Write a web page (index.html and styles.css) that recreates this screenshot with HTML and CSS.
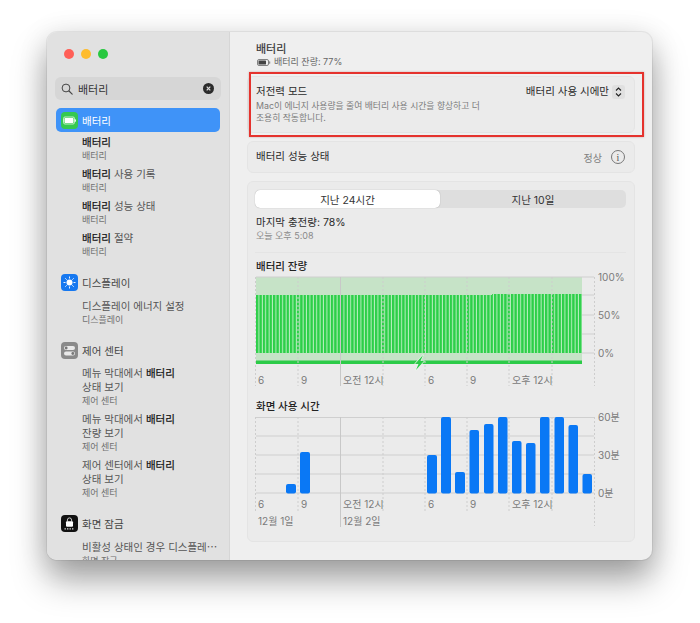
FILE: index.html
```html
<!DOCTYPE html>
<html lang="ko">
<head>
    <meta charset="UTF-8">
    <title>배터리</title>
    <link rel="stylesheet" href="styles.css">
</head>
<body>
    <div class="window">
        <aside class="sidebar">
            <div class="lights">
                <span class="light red"></span>
                <span class="light yellow"></span>
                <span class="light green"></span>
            </div>

            <div class="search">
                <svg class="search-icon" width="12" height="12" viewBox="0 0 12 12"><circle cx="5" cy="5" r="3.9" fill="none" stroke="#444" stroke-width="1"/><path d="M8 8l3.2 3.2" stroke="#444" stroke-width="1.1" stroke-linecap="round"/></svg>
                <span class="search-text">배터리</span>
                <svg class="search-clear" width="11" height="11" viewBox="0 0 11 11"><circle cx="5.5" cy="5.5" r="5.5" fill="#2b2b2b"/><path d="M3.7 3.7l3.6 3.6M7.3 3.7l-3.6 3.6" stroke="#ddd" stroke-width="1.2"/></svg>
            </div>

            <div class="nav-head selected">
                <svg class="nav-icon" viewBox="0 0 17 17"><rect width="17" height="17" rx="4" fill="#35c94f"/><rect x="2.5" y="5" width="11" height="7" rx="1.5" fill="none" stroke="#e8f8ea" stroke-width=".8"/><rect x="3.5" y="6" width="9" height="5" rx=".8" fill="#fff"/><rect x="14" y="7.2" width="1" height="2.6" rx=".5" fill="#e8f8ea"/></svg>
                <span>배터리</span>
            </div>
            <div class="nav-item"><div class="title"><b>배터리</b></div><div class="sub">배터리</div></div>
            <div class="nav-item"><div class="title"><b>배터리</b> 사용 기록</div><div class="sub">배터리</div></div>
            <div class="nav-item"><div class="title"><b>배터리</b> 성능 상태</div><div class="sub">배터리</div></div>
            <div class="nav-item"><div class="title"><b>배터리</b> 절약</div><div class="sub">배터리</div></div>

            <div class="nav-head group">
                <svg class="nav-icon" viewBox="0 0 17 17"><rect width="17" height="17" rx="4" fill="#1678f0"/><circle cx="8.5" cy="8.5" r="3" fill="#fff"/><path d="M8.5 2.5v2M8.5 12.5v2M2.5 8.5h2M12.5 8.5h2M4.3 4.3l1.4 1.4M11.3 11.3l1.4 1.4M12.7 4.3l-1.4 1.4M5.7 11.3l-1.4 1.4" stroke="#fff" stroke-width=".9"/></svg>
                <span>디스플레이</span>
            </div>
            <div class="nav-item"><div class="title">디스플레이 에너지 설정</div><div class="sub">디스플레이</div></div>

            <div class="nav-head group">
                <svg class="nav-icon" viewBox="0 0 17 17"><rect width="17" height="17" rx="4" fill="#8a8a8a"/><rect x="3" y="4" width="11" height="4" rx="2" fill="#e9e9e9"/><circle cx="5.2" cy="6" r="1.4" fill="#777"/><rect x="3" y="9.5" width="11" height="4" rx="2" fill="#e9e9e9"/><circle cx="11.8" cy="11.5" r="1.4" fill="#777"/></svg>
                <span>제어 센터</span>
            </div>
            <div class="nav-item"><div class="title">메뉴 막대에서 <b>배터리</b><br>상태 보기</div><div class="sub">제어 센터</div></div>
            <div class="nav-item"><div class="title">메뉴 막대에서 <b>배터리</b><br>잔량 보기</div><div class="sub">제어 센터</div></div>
            <div class="nav-item"><div class="title">제어 센터에서 <b>배터리</b><br>상태 보기</div><div class="sub">제어 센터</div></div>

            <div class="nav-head group">
                <svg class="nav-icon" viewBox="0 0 17 17"><rect width="17" height="17" rx="4" fill="#111"/><path d="M6.4 6.5V5a2.1 2.1 0 0 1 4.2 0v1.500" fill="none" stroke="#ddd" stroke-width=".9"/><rect x="5" y="6.300" width="7" height="5.500" rx="1" fill="#fff"/><path d="M3.500 13.800h1.400M6 13.800h1.400M8.500 13.800h1.400M11 13.800h1.400" stroke="#ddd" stroke-width="1.300"/></svg>
                <span>화면 잠금</span>
            </div>
            <div class="nav-item"><div class="title">비활성 상태인 경우 디스플레⋯</div><div class="sub">화면 잠금</div></div>
        </aside>

        <main class="main">
            <header class="page-head">
                <div class="page-title">배터리</div>
                <div class="page-sub">
                    <svg width="14" height="7" viewBox="0 0 14 7"><rect x=".5" y=".5" width="11" height="6" rx="1.5" fill="none" stroke="#666" stroke-width=".8"/><rect x="1.5" y="1.5" width="7.5" height="4" rx=".6" fill="#444"/><rect x="12.2" y="2.300" width="1" height="2.400" rx=".5" fill="#777"/></svg>
                    <span>배터리 잔량: 77%</span>
                </div>
            </header>

            <section class="card power-card">
                <div class="power-text">
                    <div class="row-title">저전력 모드</div>
                    <div class="power-desc">Mac이 에너지 사용량을 줄여 배터리 사용 시간을 향상하고 더<br>조용히 작동합니다.</div>
                </div>
                <div class="power-select">
                    <span>배터리 사용 시에만</span>
                    <svg class="stepper" width="13" height="14" viewBox="0 0 13 14"><rect width="13" height="14" rx="3" fill="#e0e0e0"/><path d="M4 5.500l2.500-2.500L9 5.500M4 8.500l2.500 2.500L9 8.500" fill="none" stroke="#222" stroke-width="1.100"/></svg>
                </div>
            </section>

            <section class="card health-card">
                <div class="row-title">배터리 성능 상태</div>
                <div class="health-right">
                    <span class="health-state">정상</span>
                    <span class="info-btn">i</span>
                </div>
            </section>

            <section class="card history">
                <div class="segments">
                    <div class="segment active">지난 24시간</div>
                    <div class="segment">지난 10일</div>
                </div>
                <div class="last-charge">마지막 충전량: 78%</div>
                <div class="last-time">오늘 오후 5:08</div>
                <div class="divider"></div>

                <div class="chart-title">배터리 잔량</div>
                <svg class="chart" width="375" height="118" viewBox="255 272 375 118">
                    <defs>
                        <pattern id="stripes" patternUnits="userSpaceOnUse" x="256" y="0" width="3.4" height="10">
                            <rect width="3.4" height="10" fill="#bdf0c3"/>
                            <rect width="2.4" height="10" fill="#2ccf48"/>
                        </pattern>
                    </defs>
                    <rect x="256" y="277" width="326" height="87" fill="#c6e3c7"/>
                    <path class="grid" d="M256 277H594M582 295H594M582 315H594M582 334H594M582 353H594"/>
                    <rect x="256" y="295" width="236" height="58" fill="url(#stripes)"/>
                    <rect x="492" y="294" width="90" height="59" fill="url(#stripes)"/>
                    <rect x="256" y="360.500" width="326" height="3.500" fill="#2ccb48"/>
                    <path class="grid-dot" d="M255.500 277V386M298 277V386M383 277V386M425 277V386M467 277V386M509 277V386M552 277V386M594.500 277V386"/>
                    <path class="grid-solid" d="M340.500 277V386"/>
                    <path d="M423 355l-8 9h3.500l-2.500 6 8-9h-3.500z" fill="#2ccb48" stroke="#ecf7ec" stroke-width="1.200" stroke-linejoin="round" paint-order="stroke"/>
                    <text class="tick" x="258" y="384">6</text>
                    <text class="tick" x="301" y="384">9</text>
                    <text class="tick" x="343" y="384">오전 12시</text>
                    <text class="tick" x="428" y="384">6</text>
                    <text class="tick" x="470" y="384">9</text>
                    <text class="tick" x="512" y="384">오후 12시</text>
                    <text class="tick" x="598" y="281">100%</text>
                    <text class="tick" x="598" y="319">50%</text>
                    <text class="tick" x="598" y="357">0%</text>
                </svg>

                <div class="chart-title second">화면 사용 시간</div>
                <svg class="chart" width="375" height="124" viewBox="255 412 375 124">
                    <path class="grid" d="M256 417.500H594M256 436H594M256 455H594M256 474H594M256 493H594"/>
                    <path class="grid-dot" d="M255.500 417V513M298 417V513M383 417V513M425 417V513M467 417V513M509 417V513M552 417V513M594.500 417V526"/>
                    <path class="grid-solid" d="M340.500 417V527"/>
                    <g class="bars">
                        <rect x="286" y="484" width="10" height="9.500" rx="2"/>
                        <rect x="300" y="452" width="10" height="41.500" rx="2"/>
                        <rect x="427" y="455" width="10" height="38.500" rx="2"/>
                        <rect x="441" y="417" width="10" height="76.500" rx="2"/>
                        <rect x="455" y="472" width="10" height="21.500" rx="2"/>
                        <rect x="469.500" y="430" width="9.500" height="63.500" rx="2"/>
                        <rect x="484" y="424" width="9.500" height="69.500" rx="2"/>
                        <rect x="498" y="417" width="9.500" height="76.500" rx="2"/>
                        <rect x="512" y="441" width="9.500" height="52.500" rx="2"/>
                        <rect x="526" y="443" width="9.500" height="50.500" rx="2"/>
                        <rect x="540" y="417" width="9.500" height="76.500" rx="2"/>
                        <rect x="554.500" y="417" width="9.500" height="76.500" rx="2"/>
                        <rect x="568.500" y="425" width="9.500" height="68.500" rx="2"/>
                        <rect x="582.500" y="474" width="9.500" height="19.500" rx="2"/>
                    </g>
                    <text class="tick" x="258" y="508">6</text>
                    <text class="tick" x="301" y="508">9</text>
                    <text class="tick" x="343" y="508">오전 12시</text>
                    <text class="tick" x="428" y="508">6</text>
                    <text class="tick" x="470" y="508">9</text>
                    <text class="tick" x="512" y="508">오후 12시</text>
                    <text class="tick" x="258" y="525">12월 1일</text>
                    <text class="tick" x="343" y="525">12월 2일</text>
                    <text class="tick" x="598" y="421">60분</text>
                    <text class="tick" x="598" y="459">30분</text>
                    <text class="tick" x="598" y="497">0분</text>
                </svg>
            </section>
        </main>
    </div>
</body>
</html>
```

FILE: styles.css
```css
* { box-sizing: border-box; }
html, body { height: 100%; }
body { margin: 0; background: #fff; padding: 32px 48px 0 47px; font-family: Inter, "Noto Sans CJK KR", sans-serif; color: #2a2a2a; }

.window { display: flex; width: 605px; height: 528px; background: #efefef; border-radius: 10px; overflow: hidden; box-shadow: 0 0 0 1px rgba(0,0,0,.06), 0 20px 34px rgba(0,0,0,.34), 0 4px 30px rgba(0,0,0,.12); }

.sidebar { width: 183px; flex-shrink: 0; background: #e1e1e1; border-right: 1px solid #d6d6d6; padding: 0 8px; overflow: hidden; }
.lights { display: flex; gap: 7px; padding: 17px 0 0 9px; height: 45px; }
.light { width: 10px; height: 10px; border-radius: 50%; }
.light.red { background: #ff5f57; }
.light.yellow { background: #febc2e; }
.light.green { background: #28c840; }

.search { display: flex; align-items: center; height: 23px; background: #d6d6d6; border-radius: 6px; padding: 0 7px 0 6px; }
.search-icon { margin-right: 5px; }
.search-text { flex: 1; font-size: 11px; color: #333; }

.nav-head { display: flex; align-items: center; gap: 4px; height: 24px; padding-left: 5px; font-size: 10.500px; color: #444; margin: 0 1px; }
.nav-head.selected { background: #3f93f8; color: #fff; border-radius: 5px; margin-top: 8px; margin-bottom: 4px; }
.nav-head.group { margin-top: 12.500px; margin-bottom: 5px; }
.nav-icon { width: 17px; height: 17px; flex-shrink: 0; }

.nav-item { padding-left: 27px; margin-bottom: 6px; white-space: nowrap; }
.nav-item .title { font-size: 10.500px; line-height: 14px; color: #555; }
.nav-item b { font-weight: 400; color: #111; -webkit-text-stroke: .2px #111; }
.nav-item .sub { font-size: 9px; line-height: 12px; color: #707070; }

.main { flex: 1; padding: 0 17px 0 17px; overflow: hidden; }
.page-head { height: 44px; padding: 10px 0 0 9px; }
.page-title { font-size: 11px; line-height: 14px; color: #333; -webkit-text-stroke: .2px #333; }
.page-sub { display: flex; align-items: center; gap: 3px; font-size: 9px; line-height: 12px; color: #666; padding-left: 1px; }

.card { background: #ebebeb; border: 1px solid #e4e4e4; border-radius: 6px; }
.row-title { font-size: 10.500px; line-height: 14px; color: #2a2a2a; }

.power-card { position: relative; display: flex; justify-content: space-between; height: 57px; padding: 8px 9px 0 8px; margin-bottom: 8px; }
.power-card::after { content: ""; position: absolute; top: -5px; left: 1px; right: -10px; bottom: -5px; border: 2px solid #e5322d; box-shadow: 0 0 2px rgba(120,0,0,.3); }
.power-desc { font-size: 8.800px; line-height: 12px; color: #7c7c7c; margin-top: 1px; }
.power-select { display: flex; align-items: flex-start; gap: 3px; font-size: 10.500px; line-height: 14px; color: #2a2a2a; }

.health-card { display: flex; align-items: center; justify-content: space-between; height: 32px; padding: 0 9px 0 8px; margin-bottom: 8px; }
.health-right { display: flex; align-items: center; gap: 9px; }
.health-state { font-size: 10px; color: #808080; }
.info-btn { display: flex; align-items: center; justify-content: center; width: 14px; height: 14px; border: 1px solid #777; border-radius: 50%; font-family: "Liberation Serif", serif; font-size: 10px; color: #555; }

.history { height: 361px; padding: 8px 8px 0 7px; }
.segments { display: flex; height: 18px; background: #dedede; border-radius: 5px; width: 371px; }
.segment { flex: 1; display: flex; align-items: center; justify-content: center; font-size: 10.500px; color: #333; }
.segment.active { flex: none; width: 185px; background: #fff; border-radius: 5px; box-shadow: 0 0 1px rgba(0,0,0,.35); }
.last-charge { font-size: 10.500px; line-height: 14px; margin: 8px 0 0 1px; color: #2a2a2a; }
.last-time { font-size: 9px; line-height: 12px; margin: 0 0 0 1px; color: #8a8a8a; }
.divider { height: 1px; background: #e4e4e4; margin: 10px 0 7px; width: 371px; }
.chart-title { font-size: 10.500px; line-height: 14px; font-weight: 500; color: #222; margin-left: 1px; }
.chart-title.second { margin-top: 10px; }
.chart { display: block; margin-top: -2px; }

.grid { stroke: #cfcfcf; stroke-width: 1; fill: none; }
.grid-dot { stroke: #cdcdcd; stroke-width: 1; stroke-dasharray: 2 2; fill: none; }
.grid-solid { stroke: #c8c8c8; stroke-width: 1; fill: none; }
.bars rect { fill: #0a78f5; }
.tick { font-size: 10px; fill: #7a7a7a; }
```
